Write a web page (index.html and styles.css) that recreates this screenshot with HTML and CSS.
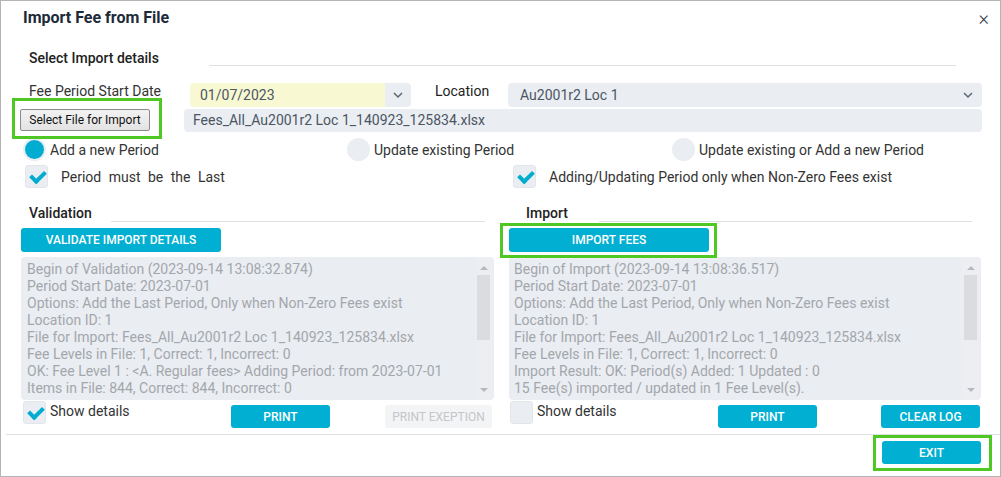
FILE: index.html
```html
<!DOCTYPE html>
<html lang="en">
<head>
    <meta charset="UTF-8">
    <title>Import Fee from File</title>
    <link rel="stylesheet" href="styles.css">
</head>
<body>
    <div class="dialog">
        <div class="title-bar">
            <h1>Import Fee from File</h1>
            <span class="close">&times;</span>
        </div>

        <div class="content">
            <div class="section-head head-details">
                <span class="section-title">Select Import details</span>
                <span class="section-line"></span>
            </div>

            <div class="field-row">
                <label class="field-label">Fee Period Start Date</label>
                <div class="combo date-combo">
                    <span class="combo-value">01/07/2023</span>
                    <span class="combo-arrow">
                        <svg width="12" height="8" viewBox="0 0 12 8"><path d="M2 2l4 4 4-4" fill="none" stroke="#5b6673" stroke-width="1.5"/></svg>
                    </span>
                </div>
                <label class="field-label location-label">Location</label>
                <div class="combo location-combo">
                    <span class="combo-value">Au2001r2 Loc 1</span>
                    <span class="combo-arrow">
                        <svg width="12" height="8" viewBox="0 0 12 8"><path d="M2 2l4 4 4-4" fill="none" stroke="#5b6673" stroke-width="1.5"/></svg>
                    </span>
                </div>
            </div>

            <div class="file-row">
                <span class="highlight hl-file"><button class="win-btn">Select File for Import</button></span>
                <div class="file-name">Fees_All_Au2001r2 Loc 1_140923_125834.xlsx</div>
            </div>

            <div class="radio-row">
                <div class="option"><span class="radio checked"></span>Add a new Period</div>
                <div class="option"><span class="radio"></span>Update existing Period</div>
                <div class="option"><span class="radio"></span>Update existing or Add a new Period</div>
            </div>

            <div class="check-row">
                <div class="option wide-gap"><span class="check checked"></span><span class="spaced">Period must be the Last</span></div>
                <div class="option wide-gap"><span class="check checked"></span>Adding/Updating Period only when Non-Zero Fees exist</div>
            </div>

            <div class="panels">
                <div class="panel">
                    <div class="section-head head-validation">
                        <span class="section-title">Validation</span>
                        <span class="section-line"></span>
                    </div>
                    <div class="panel-action">
                        <button class="btn btn-wide">Validate Import Details</button>
                    </div>
                    <div class="log">
                        <div class="log-text">
                            <div>Begin of Validation (2023-09-14 13:08:32.874)</div>
                            <div>Period Start Date: 2023-07-01</div>
                            <div>Options: Add the Last Period, Only when Non-Zero Fees exist</div>
                            <div>Location ID: 1</div>
                            <div>File for Import: Fees_All_Au2001r2 Loc 1_140923_125834.xlsx</div>
                            <div>Fee Levels in File: 1, Correct: 1, Incorrect: 0</div>
                            <div>OK: Fee Level 1 : &lt;A. Regular fees&gt; Adding Period: from 2023-07-01</div>
                            <div>Items in File: 844, Correct: 844, Incorrect: 0</div>
                        </div>
                        <div class="scrollbar">
                            <span class="arrow-up"></span>
                            <span class="thumb"></span>
                            <span class="arrow-down"></span>
                        </div>
                    </div>
                    <div class="panel-foot">
                        <div class="option show-details"><span class="check checked"></span>Show details</div>
                        <button class="btn btn-small">Print</button>
                        <button class="btn btn-small btn-disabled">Print Exeption</button>
                    </div>
                </div>

                <div class="panel">
                    <div class="section-head head-import">
                        <span class="section-title">Import</span>
                        <span class="section-line"></span>
                    </div>
                    <div class="panel-action">
                        <span class="highlight hl-import"><button class="btn btn-wide">Import Fees</button></span>
                    </div>
                    <div class="log">
                        <div class="log-text">
                            <div>Begin of Import (2023-09-14 13:08:36.517)</div>
                            <div>Period Start Date: 2023-07-01</div>
                            <div>Options: Add the Last Period, Only when Non-Zero Fees exist</div>
                            <div>Location ID: 1</div>
                            <div>File for Import: Fees_All_Au2001r2 Loc 1_140923_125834.xlsx</div>
                            <div>Fee Levels in File: 1, Correct: 1, Incorrect: 0</div>
                            <div>Import Result: OK: Period(s) Added: 1 Updated : 0</div>
                            <div>15 Fee(s) imported / updated in 1 Fee Level(s).</div>
                        </div>
                        <div class="scrollbar">
                            <span class="arrow-up"></span>
                            <span class="thumb"></span>
                            <span class="arrow-down"></span>
                        </div>
                    </div>
                    <div class="panel-foot">
                        <div class="option show-details"><span class="check"></span>Show details</div>
                        <button class="btn btn-small">Print</button>
                        <button class="btn btn-small">Clear Log</button>
                    </div>
                </div>
            </div>
        </div>

        <div class="footer">
            <span class="highlight hl-exit"><button class="btn btn-small">Exit</button></span>
        </div>
    </div>
</body>
</html>
```

FILE: styles.css
```css
body {
    margin: 0;
    background: #fff;
    font-family: Roboto, "Noto Sans", Arial, sans-serif;
    color: #333;
}

.dialog {
    width: 1001px;
    height: 477px;
    box-sizing: border-box;
    border: 1px solid #b4b4b4;
    background: #fff;
}

.title-bar {
    height: 33px;
    display: flex;
    align-items: center;
    justify-content: space-between;
    padding: 0 11px 0 22px;
}

.title-bar h1 {
    margin: 0;
    font-size: 16px;
    font-weight: 700;
    color: #1d2a38;
}

.close {
    font-size: 20px;
    line-height: 20px;
    color: #37424d;
    font-weight: 300;
}

.content {
    padding: 0 18px 0 19px;
}

/* section headers with a rule */
.section-head {
    display: flex;
    height: 20px;
}

.section-title {
    font-size: 14px;
    font-weight: 500;
    line-height: 20px;
    color: #222;
    flex: none;
}

.section-line {
    flex: 1;
    height: 1px;
    background: #dde0e4;
    align-self: flex-end;
    margin-bottom: 2px;
}

.head-details {
    margin-top: 14px;
    padding-left: 9px;
}

.head-details .section-title {
    width: 180px;
}

.head-details .section-line {
    margin-right: 26px;
}

.head-validation {
    padding-left: 8px;
}

.head-validation .section-title {
    width: 82px;
}

.head-import {
    padding-left: 17px;
}

.head-import .section-title {
    width: 73px;
}

.head-validation .section-line,
.head-import .section-line {
    margin-right: 9px;
    margin-bottom: 1px;
}

/* fields */
.field-row {
    display: flex;
    margin-top: 15px;
    height: 24px;
}

.field-label {
    font-size: 14px;
    line-height: 16px;
    flex: none;
}

.field-row > .field-label:first-child {
    width: 161px;
    margin-left: 9px;
}

.location-label {
    width: 73px;
    margin-left: 24px;
    color: #222;
}

.combo {
    display: flex;
    align-items: center;
    height: 24px;
    border-radius: 4px;
    background: #eaedf2;
    font-size: 14px;
    color: #4b5663;
}

.combo-value {
    flex: 1;
    padding-left: 10px;
}

.combo-arrow {
    width: 26px;
    height: 24px;
    display: flex;
    align-items: center;
    justify-content: center;
}

.date-combo {
    width: 221px;
    background: linear-gradient(to right, #f8f8d2 195px, #eaedf2 195px);
}

.location-combo {
    flex: 1;
    padding-right: 1px;
}

.location-combo .combo-value {
    padding-left: 12px;
}

.file-row {
    display: flex;
    margin-top: 2px;
    height: 23px;
}

.win-btn {
    width: 130px;
    height: 22px;
    padding: 0;
    font-family: Roboto, Arial, sans-serif;
    font-size: 12px;
    color: #111;
    background: linear-gradient(#f2f2f2, #e3e3e3);
    border: 1px solid #8a8a8a;
    border-radius: 2px;
    display: block;
}

.file-name {
    flex: 1;
    margin-left: 34px;
    background: #eaedf2;
    border-radius: 4px;
    font-size: 14px;
    line-height: 23px;
    color: #4b5663;
    padding-left: 9px;
}

/* green annotation boxes */
.highlight {
    position: relative;
    display: inline-block;
}

.highlight::after {
    content: "";
    position: absolute;
    border: 3px solid #4fc824;
}

.hl-file::after {
    top: -11px;
    bottom: -7px;
    left: -8px;
    right: -12px;
}

.hl-import::after {
    top: -5px;
    bottom: -6px;
    left: -9px;
    right: -8px;
}

.hl-exit::after {
    top: -6px;
    bottom: -7px;
    left: -9px;
    right: -11px;
}

/* radios and checkboxes */
.option {
    display: flex;
    align-items: center;
    gap: 4px;
    font-size: 14px;
    color: #333;
}

.radio-row {
    display: grid;
    grid-template-columns: 324px 325px 1fr;
    margin-top: 6px;
    padding-left: 3px;
    height: 22px;
}

.radio {
    width: 23px;
    height: 23px;
    border-radius: 50%;
    background: #eaedf2;
    box-sizing: border-box;
    flex: none;
}

.radio.checked {
    border: 2px solid #eaedf2;
    background: #00acd0;
}

.check-row {
    display: grid;
    grid-template-columns: 488px 1fr;
    margin-top: 5px;
    padding-left: 5px;
    height: 23px;
}

.wide-gap {
    gap: 13px;
}

.spaced {
    word-spacing: 4px;
}

.check {
    width: 23px;
    height: 23px;
    border-radius: 3px;
    background: #eaedf2;
    box-sizing: border-box;
    border: 1px solid #e2e5ea;
    position: relative;
    flex: none;
}

.check.checked::after {
    content: "";
    position: absolute;
    left: 7px;
    top: 2px;
    width: 6px;
    height: 11px;
    border-right: 4px solid #00acd0;
    border-bottom: 4px solid #00acd0;
    transform: rotate(45deg);
}

/* panels */
.panels {
    display: grid;
    grid-template-columns: 473px 472px;
    gap: 15px;
    margin-top: 15px;
    padding-left: 1px;
}

.panel-action {
    margin-top: 5px;
    height: 24px;
}

.btn {
    display: block;
    border: none;
    border-radius: 3px;
    background: #00afd1;
    color: #fff;
    font-family: Roboto, Arial, sans-serif;
    font-size: 12px;
    font-weight: 500;
    text-transform: uppercase;
    padding: 0;
}

.btn-wide {
    width: 200px;
    height: 24px;
}

.btn-small {
    width: 99px;
    height: 23px;
}

.btn-disabled {
    width: 107px;
    background: #f3f4f6;
    color: #c4c6c9;
    font-weight: 400;
}

.log {
    display: flex;
    margin-top: 5px;
    height: 143px;
    background: #eaedf2;
    border-radius: 4px;
}

.log-text {
    flex: 1;
    padding: 4px 0 0 6px;
    font-size: 14px;
    line-height: 17px;
    color: #a3a7ac;
    white-space: nowrap;
    overflow: hidden;
}

.panel:last-child .log-text {
    padding-left: 5px;
}

.scrollbar {
    width: 17px;
    margin-right: 2px;
    display: flex;
    flex-direction: column;
    align-items: center;
    padding: 9px 0 8px;
    background: #eceef2;
}

.thumb {
    width: 13px;
    height: 65px;
    margin-top: 5px;
    background: #dadce0;
}

.arrow-up,
.arrow-down {
    width: 0;
    height: 0;
    border-left: 4px solid transparent;
    border-right: 4px solid transparent;
}

.arrow-up {
    border-bottom: 4px solid #b5b8bd;
}

.arrow-down {
    margin-top: auto;
    border-top: 4px solid #b5b8bd;
}

.panel-foot {
    display: flex;
    align-items: flex-start;
    margin-top: 1px;
    height: 27px;
    padding: 0 2px 0 2px;
}

.panel:last-child .panel-foot {
    padding: 0 1px 0 1px;
}

.show-details {
    width: 208px;
    align-items: flex-start;
    line-height: 20px;
}

.panel-foot .btn {
    margin-top: 4px;
}

.panel-foot .btn:last-child {
    margin-left: auto;
}

.footer {
    margin: 6px 0 0 5px;
    border-top: 1px solid #dcdfe3;
    padding: 6px 19px 0 0;
    display: flex;
    justify-content: flex-end;
}
```
